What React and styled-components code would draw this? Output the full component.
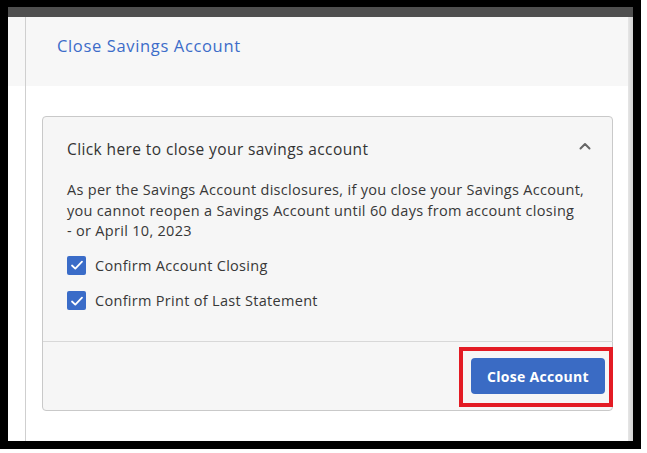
import React from "react";
import styled, { createGlobalStyle } from "styled-components";

const Global = createGlobalStyle`
  html, body { margin: 0; padding: 0; background: #ffffff; }
  body { font-family: "Open Sans", "Noto Sans", Arial, sans-serif; }
`;

const Frame = styled.div`
  box-sizing: border-box;
  width: 641px;
  height: 449px;
  border: 8px solid #000;
  border-top-width: 7px;
  display: flex;
  flex-direction: column;
  overflow: hidden;
`;

const TopBar = styled.div`
  height: 10px;
  background: #4f4f4f;
  flex: none;
`;

const Viewport = styled.div`
  flex: 1;
  display: flex;
  min-height: 0;
`;

const Main = styled.div`
  flex: 1;
  position: relative;
  display: flex;
  flex-direction: column;
  background: #fff;
  &::after {
    content: "";
    position: absolute;
    left: 17px;
    top: 0;
    bottom: 0;
    width: 1px;
    background: #cfcfcf;
  }
`;

const Scrollbar = styled.div`
  width: 5px;
  flex: none;
  background: linear-gradient(to right, #e6e6e6, #d2d2d2);
`;

const Header = styled.div`
  box-sizing: border-box;
  height: 69px;
  flex: none;
  background: #f7f7f7;
  display: flex;
  align-items: center;
  padding: 0 0 12px 49px;
`;

const Title = styled.h1`
  margin: 0;
  font-size: 16.5px;
  font-weight: 500;
  color: #3c6cc9;
  letter-spacing: 0.65px;
`;

const Body = styled.div`
  padding: 30px 15px 0 34px;
`;

const Card = styled.div`
  box-sizing: border-box;
  height: 295px;
  border: 1px solid #c9c9c9;
  border-radius: 4px;
  background: #f6f6f6;
  display: flex;
  flex-direction: column;
`;

const CardHead = styled.div`
  flex: none;
  display: flex;
  align-items: center;
  justify-content: space-between;
  padding: 20px 21px 0 24px;
  height: 24px;
  margin-bottom: 19px;
`;

const HeadText = styled.span`
  font-size: 15.5px;
  color: #333;
  letter-spacing: 0.4px;
`;

const ChevronIcon = styled.svg`
  margin-bottom: 6px;
`;

const Content = styled.div`
  flex: none;
  padding: 0 24px;
  height: 161px;
  box-sizing: border-box;
`;

const Notice = styled.p`
  margin: 0 0 13.5px;
  font-size: 14.5px;
  line-height: 20.5px;
  color: #383838;
  letter-spacing: 0.3px;
`;

const CheckRow = styled.label`
  display: flex;
  align-items: center;
  gap: 9px;
  height: 20px;
  margin-bottom: 15.5px;
  font-size: 14.5px;
  color: #383838;
  letter-spacing: 0.3px;
`;

const Box = styled.span`
  width: 19px;
  height: 19px;
  border-radius: 2px;
  background: #3a6cc8;
  display: flex;
  align-items: center;
  justify-content: center;
  flex: none;
`;

const Footer = styled.div`
  flex: 1;
  border-top: 1px solid #d8d8d8;
  display: flex;
  justify-content: flex-end;
  align-items: flex-start;
  padding-top: 5px;
  margin-right: -1px;
`;

const Highlight = styled.div`
  border: 4px solid #e31b24;
  padding: 7px 4px 9px 8px;
  display: flex;
`;

const Button = styled.button`
  width: 134px;
  height: 36px;
  border: none;
  border-radius: 4px;
  background: #3a6bc4;
  color: #fff;
  font-family: "Open Sans", Arial, sans-serif;
  font-size: 14px;
  font-weight: 700;
  letter-spacing: 0.3px;
  cursor: pointer;
`;

const Check = () => (
  <svg width="14" height="12" viewBox="0 0 14 12">
    <path d="M2 6.5 L5.3 9.6 L12 2.6" fill="none" stroke="#fff" strokeWidth="1.8" strokeLinecap="round" strokeLinejoin="round" />
  </svg>
);

const Chevron = () => (
  <ChevronIcon width="12" height="8" viewBox="0 0 12 8">
    <path d="M1.5 6.5 L6 2 L10.5 6.5" fill="none" stroke="#666" strokeWidth="2" strokeLinecap="round" strokeLinejoin="round" />
  </ChevronIcon>
);

export default function App() {
  return (
    <>
      <Global />
      <Frame>
        <TopBar />
        <Viewport>
          <Main>
            <Header>
              <Title>Close Savings Account</Title>
            </Header>
            <Body>
              <Card>
                <CardHead>
                  <HeadText>Click here to close your savings account</HeadText>
                  <Chevron />
                </CardHead>
                <Content>
                  <Notice>
                    As per the Savings Account disclosures, if you close your Savings Account,
                    <br />
                    you cannot reopen a Savings Account until 60 days from account closing
                    <br />- or April 10, 2023
                  </Notice>
                  <CheckRow>
                    <Box><Check /></Box>
                    Confirm Account Closing
                  </CheckRow>
                  <CheckRow>
                    <Box><Check /></Box>
                    Confirm Print of Last Statement
                  </CheckRow>
                </Content>
                <Footer>
                  <Highlight>
                    <Button>Close Account</Button>
                  </Highlight>
                </Footer>
              </Card>
            </Body>
          </Main>
          <Scrollbar />
        </Viewport>
      </Frame>
    </>
  );
}
